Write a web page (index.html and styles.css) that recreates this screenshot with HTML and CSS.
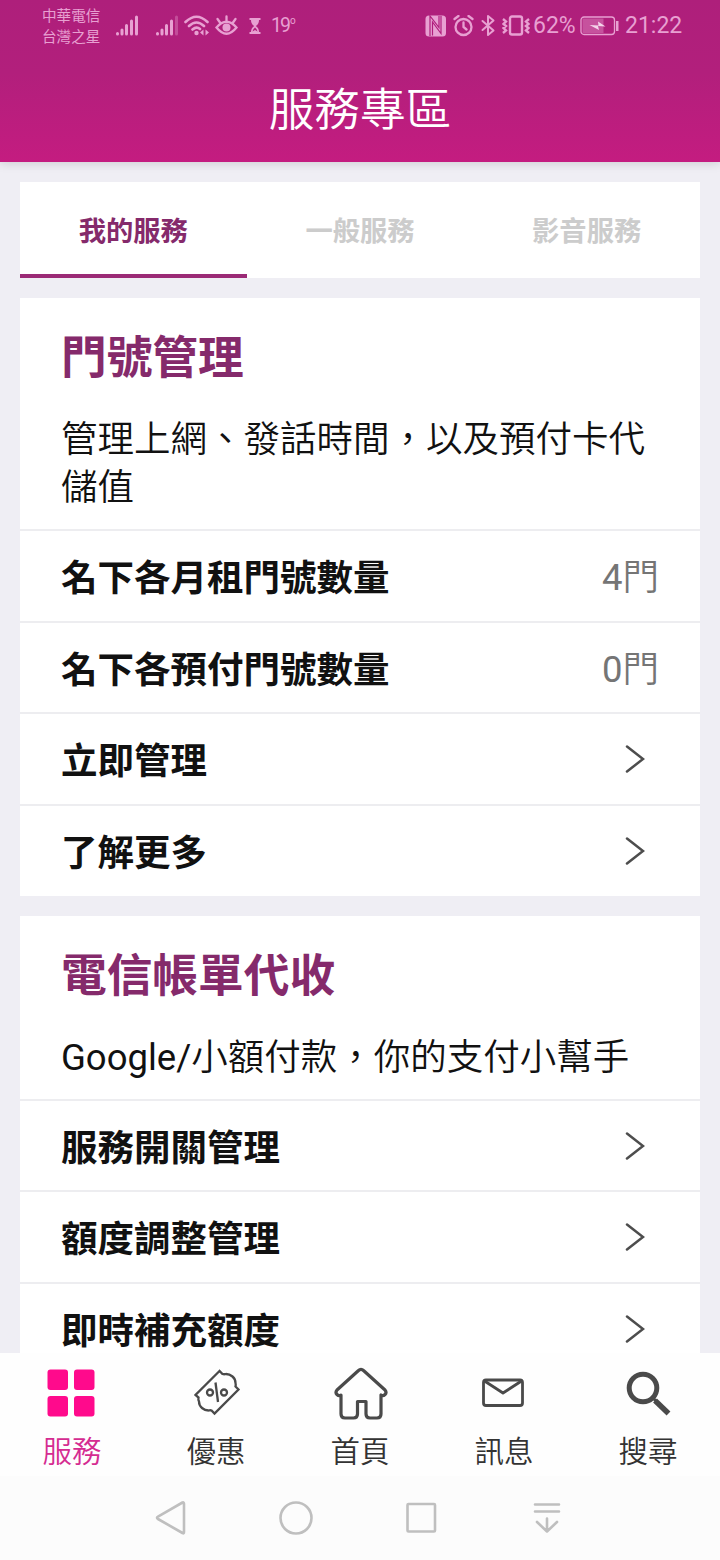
FILE: index.html
```html
<!DOCTYPE html>
<html lang="zh-Hant">
<head>
<meta charset="utf-8">
<title>服務專區</title>
<link rel="stylesheet" href="styles.css">
</head>
<body>
<div class="screen">
  <header class="header">
    <div class="status">
      <div class="carriers"><span>中華電信</span><span>台灣之星</span></div>
      <svg class="signal" width="24" height="22" viewBox="0 0 24 22"><g stroke="currentColor" stroke-width="3" stroke-linecap="round"><path d="M2.500 18.500v.5M7 15v4M11.500 10.500v8.500M16.500 6v13M21.500 2v17"/></g></svg>
      <svg class="signal-two" width="24" height="22" viewBox="0 0 24 22"><g stroke="currentColor" stroke-width="3" stroke-linecap="round"><path d="M2.500 18.500v.5M7 15v4M11.500 10.500v8.500M16.500 6v13"/><path opacity=".35" d="M21.500 2v17"/></g></svg>
      <svg class="wifi" width="26" height="22" viewBox="0 0 26 22" fill="none" stroke="currentColor" stroke-width="2.600" stroke-linecap="round"><path d="M1.500 7Q12.500-3.500 23.500 7M5 11Q12.500 4 20 11M8.500 14.500Q12.500 11 16 14"/><g fill="currentColor" stroke="none"><circle cx="12.500" cy="18" r="2.200"/><path d="M19.500 14.500v6l-3.500-3zM21.500 14.500v6l3.500-3z"/></g></svg>
      <svg class="eye" width="23" height="22" viewBox="0 0 23 22" fill="none" stroke="currentColor" stroke-width="2.300" stroke-linecap="round"><path d="M1.500 12.500Q11.500 1 21.500 12.500Q11.500 25 1.500 12.500ZM11.500 6V1.500M5 7.500L2.500 4M18 7.500l2.500-3.500"/><circle cx="11.500" cy="12.500" r="4" fill="currentColor" stroke="none"/></svg>
      <svg class="hourglass" width="12" height="16" viewBox="0 0 12 16"><path fill="currentColor" d="M.5 0h11v2H10q0 4-3.200 6Q10 10 10 14h1.500v2H.5v-2H2q0-4 3.200-6Q2 6 2 2H.5z"/><path d="M6 9.500Q4 11 3.500 13.500L6 12l2.500 1.500Q8 11 6 9.500z" fill="#b01e7c"/></svg>
      <span class="temp">19<sup>o</sup></span>
      <svg class="nfc" width="22" height="22" viewBox="0 0 22 22"><rect x=".5" y=".5" width="20.500" height="21" rx="3.500" fill="currentColor"/><g fill="none" stroke="#b01e7c" stroke-width="1.200"><path d="M7.500 20.500V7l8.500 11.500V1"/><path d="M5 21V1l9 11.500V1"/></g></svg>
      <svg class="alarm" width="21" height="22" viewBox="0 0 21 22" fill="none" stroke="currentColor" stroke-width="2.300" stroke-linecap="round"><circle cx="10.500" cy="12" r="8"/><path d="M10.500 7.500V12l3 2.500M1.500 4l4-3M19.500 4l-4-3"/></svg>
      <svg class="bluetooth" width="14" height="22" viewBox="0 0 14 22" fill="none" stroke="currentColor" stroke-width="2" stroke-linecap="round" stroke-linejoin="round"><path d="M1.500 6l11 9.500L7 20V1l5.500 4.500-11 9.500"/></svg>
      <svg class="vibrate" width="28" height="22" viewBox="0 0 28 22" fill="none" stroke="currentColor" stroke-width="2.400"><rect x="8" y="1.500" width="12" height="18" rx="2"/><path d="M1 4l3 2.500L1.500 9 4 11l-2.500 2L4 15.500 1 18M27 4l-3 2.500L26.500 9 24 11l2.500 2-2.500 2.500L27 18"/></svg>
      <span class="percent">62%</span>
      <svg class="battery" width="40" height="20" viewBox="0 0 40 20"><rect x="1" y="1" width="33.500" height="17.500" rx="3" fill="none" stroke="currentColor" stroke-width="1.300"/><rect x="2.500" y="2.500" width="21" height="14.500" fill="currentColor" opacity=".4"/><path d="M9.500 9l9 .5-.5-4 7.500 5-7.500-.5 1 4z" fill="#f5d3ea"/><path d="M36 5h2.500v10H36z" fill="currentColor"/></svg>
      <span class="clock">21:22</span>
    </div>
    <h1 class="title">服務專區</h1>
  </header>

  <main class="content">
    <nav class="tabs">
      <a class="tab tab-active">我的服務</a>
      <a class="tab">一般服務</a>
      <a class="tab">影音服務</a>
    </nav>

    <section class="card">
      <div class="intro">
        <h2>門號管理</h2>
        <p>管理上網、發話時間，以及預付卡代儲值</p>
      </div>
      <div class="row"><b>名下各月租門號數量</b><span class="count"><span class="latin">4</span>門</span></div>
      <div class="row"><b>名下各預付門號數量</b><span class="count"><span class="latin">0</span>門</span></div>
      <div class="row"><b>立即管理</b><svg class="chevron" width="20" height="30" viewBox="0 0 20 30"><path d="M2 2.500L18 15 2 27.500"/></svg></div>
      <div class="row"><b>了解更多</b><svg class="chevron" width="20" height="30" viewBox="0 0 20 30"><path d="M2 2.500L18 15 2 27.500"/></svg></div>
    </section>

    <section class="card">
      <div class="intro">
        <h2>電信帳單代收</h2>
        <p><span class="latin">Google/</span>小額付款，你的支付小幫手</p>
      </div>
      <div class="row"><b>服務開關管理</b><svg class="chevron" width="20" height="30" viewBox="0 0 20 30"><path d="M2 2.500L18 15 2 27.500"/></svg></div>
      <div class="row"><b>額度調整管理</b><svg class="chevron" width="20" height="30" viewBox="0 0 20 30"><path d="M2 2.500L18 15 2 27.500"/></svg></div>
      <div class="row"><b>即時補充額度</b><svg class="chevron" width="20" height="30" viewBox="0 0 20 30"><path d="M2 2.500L18 15 2 27.500"/></svg></div>
    </section>
  </main>

  <nav class="bottom">
    <a class="item item-active">
      <svg width="56" height="56" viewBox="0 0 56 56" fill="#ff0a8c"><rect x="3.500" y="5.500" width="20.500" height="20.500" rx="3"/><rect x="30" y="5.500" width="20.500" height="20.500" rx="3"/><rect x="3.500" y="32" width="20.500" height="20.500" rx="3"/><rect x="30" y="32" width="20.500" height="20.500" rx="3"/></svg>
      <span>服務</span>
    </a>
    <a class="item">
      <svg width="56" height="56" viewBox="0 0 56 56" fill="none" stroke="#4a4a4a" stroke-width="2.300" stroke-linejoin="miter"><path d="M31.500 7L7.500 31l3 2.500q-.5 2.500.5 4 0 4 3 6.500t6.500 2.500q2-.5 3 0l3 3L50.500 25.500 47.500 22.500q.5-1.500 0-3.500 0-4-3-6.500T38 10q-2 .5-3.500 0z"/><circle cx="22" cy="28.500" r="3"/><circle cx="36" cy="28.500" r="3"/><path d="M27.500 18.500L30 38"/></svg>
      <span>優惠</span>
    </a>
    <a class="item">
      <svg width="56" height="56" viewBox="0 0 56 56" fill="none" stroke="#4a4a4a" stroke-width="3.200" stroke-linejoin="round"><path d="M26.500 6.500Q29 4 31.500 6.500L53 26q2 2.500 0 4.500t-4 .5V50q0 4-4 4h-7q-4 0-4-4V37.500h-8.500V50q0 4-4 4H13q-4 0-4-4V31q-2 1.500-4-.5T5 26z"/></svg>
      <span>首頁</span>
    </a>
    <a class="item">
      <svg width="56" height="56" viewBox="0 0 56 56" fill="none" stroke="#4a4a4a" stroke-width="2.800" stroke-linejoin="round"><rect x="7.500" y="16" width="39" height="25.500" rx="2.500"/><path d="M8.500 17L27 29 45.500 17"/></svg>
      <span>訊息</span>
    </a>
    <a class="item">
      <svg width="56" height="56" viewBox="0 0 56 56" fill="none" stroke="#4a4a4a"><circle cx="23" cy="24" r="13.800" stroke-width="5"/><path d="M32 33l4 4" stroke-width="3"/><path d="M35 36.500L48.500 49.500" stroke-width="5.500"/></svg>
      <span>搜尋</span>
    </a>
  </nav>

  <footer class="system">
    <svg width="34" height="36" viewBox="0 0 34 36"><path d="M4 16.600L28.500 2.500Q30 2 30 4v28q0 2-1.500 1L4 19q-2-1.200 0-2.400z"/></svg>
    <svg width="36" height="36" viewBox="0 0 36 36"><circle cx="17" cy="18" r="15.500"/></svg>
    <svg width="34" height="36" viewBox="0 0 34 36"><rect x="1.500" y="4" width="27.500" height="27.500" rx="1"/></svg>
    <svg width="30" height="36" viewBox="0 0 30 36"><path d="M4 4.500h24M4 11.500h24M16 18.500V31M6 22l10 9.500L26 22"/></svg>
  </footer>
</div>
</body>
</html>
```

FILE: styles.css
```css
* {
  box-sizing: border-box;
}

body {
  margin: 0;
  font-family: Roboto, "Noto Sans CJK TC", sans-serif;
  color: #111;
}

h1, h2, p {
  margin: 0;
}

svg {
  display: block;
  flex: none;
}

.screen {
  display: flex;
  flex-direction: column;
  width: 720px;
  height: 1560px;
  overflow: hidden;
  background: #efeef4;
}

.header {
  position: relative;
  flex: none;
  height: 162px;
  background: linear-gradient(#ae1f7b 0%, #b21f7c 45%, #c41c80 100%);
  box-shadow: 0 1px 10px rgba(0, 0, 0, .15);
}

.status {
  display: flex;
  align-items: center;
  height: 51px;
  padding-left: 42px;
  color: #e8a0d2;
  white-space: nowrap;
}

.carriers {
  display: flex;
  flex-direction: column;
  width: 60px;
  padding-top: 2px;
  font-size: 14.600px;
  line-height: 21px;
}

.signal { margin-left: 13px; }
.signal-two { margin-left: 16px; }
.wifi { margin-left: 5px; }
.eye { margin-left: 5px; }
.hourglass { margin-left: 11px; }

.temp {
  width: 31px;
  margin-left: 10px;
  font-size: 19.500px;
  letter-spacing: -2px;
}

.temp sup {
  margin-left: 1px;
  font-size: 10px;
  line-height: 0;
  vertical-align: 8px;
}

.nfc { margin-left: 123px; }
.alarm { margin-left: 6px; }
.bluetooth { margin-left: 7px; }
.vibrate { margin-left: 7px; }

.percent {
  width: 44px;
  margin-left: 3px;
  font-size: 23px;
}

.battery { margin-left: 3px; }

.clock {
  margin-left: 5px;
  font-size: 23px;
}

.title {
  padding-top: 4px;
  color: #fff;
  font-size: 45.700px;
  font-weight: 350;
  line-height: 112px;
  text-align: center;
}

.content {
  flex: 1;
  min-height: 0;
  overflow: hidden;
  padding: 20px 20px 0;
}

.tabs {
  display: grid;
  grid-template-columns: repeat(3, 1fr);
  height: 96px;
  background: #fff;
}

.tab {
  color: #ccc;
  font-size: 27.300px;
  font-weight: 700;
  line-height: 101px;
  text-align: center;
}

.tab-active {
  height: 96px;
  border-bottom: 4px solid #9b2a76;
  color: #852a6b;
}

.card {
  margin-top: 20px;
  background: #fff;
}

.intro {
  padding: 31px 41px 17px;
}

.intro h2 {
  color: #852a6b;
  font-size: 45.700px;
  font-weight: 700;
  line-height: 60px;
}

.intro p {
  margin-top: 27px;
  font-size: 36.500px;
  font-weight: 350;
  line-height: 48px;
}

.latin {
  font-weight: 400;
}

.row {
  display: flex;
  align-items: center;
  justify-content: space-between;
  height: 91.700px;
  padding: 0 41px;
  border-top: 2px solid #ededf0;
  font-size: 36.500px;
  line-height: 50px;
}

.row b {
  padding-top: 6px;
  font-weight: 700;
}

.count {
  padding-top: 5px;
  color: #757575;
  font-weight: 350;
}

.chevron {
  margin-right: 14px;
  fill: none;
  stroke: #4d4d4d;
  stroke-width: 2.500;
  stroke-linecap: round;
}

.bottom {
  display: grid;
  grid-template-columns: repeat(5, 1fr);
  flex: none;
  height: 123px;
  background: #fefefe;
}

.item {
  display: flex;
  flex-direction: column;
  align-items: center;
  padding-top: 11px;
  color: #333;
  font-size: 29.500px;
  font-weight: 350;
  line-height: 40px;
}

.item span {
  margin-top: 12px;
}

.item-active {
  color: #d52c91;
}

.system {
  display: flex;
  flex: none;
  height: 84px;
  padding: 24px 159px 0 154px;
  justify-content: space-between;
  background: #fcfcfc;
}

.system svg {
  fill: none;
  stroke: #bfbfbf;
  stroke-width: 2.600;
  stroke-linecap: round;
  stroke-linejoin: round;
}
```
